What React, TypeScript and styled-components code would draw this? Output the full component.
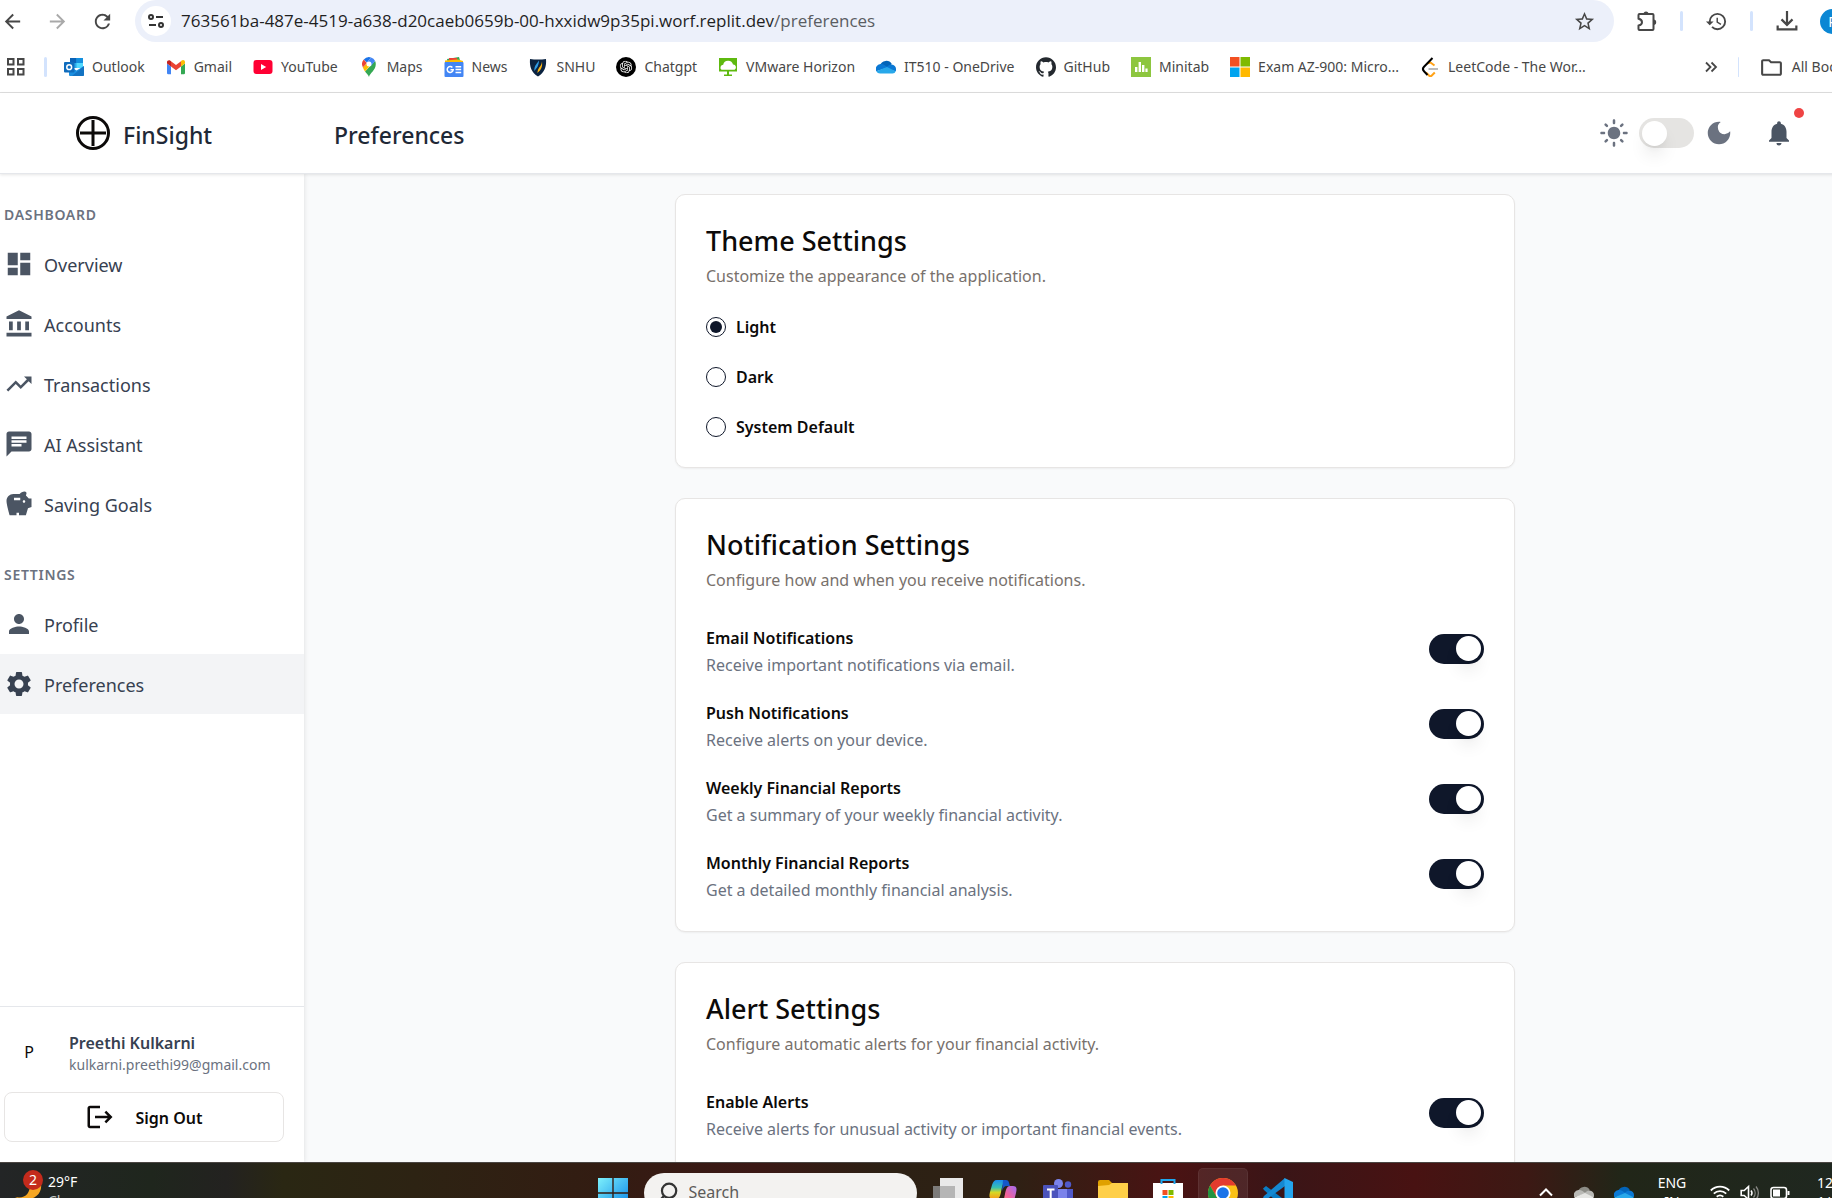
import React from "react";
import styled, { createGlobalStyle, css } from "styled-components";
import {
  MdAccountBalance,
  MdArrowBack,
  MdArrowForward,
  MdChat,
  MdDarkMode,
  MdDashboard,
  MdHistory,
  MdLightMode,
  MdLogout,
  MdNotifications,
  MdOutlineFolder,
  MdPerson,
  MdRefresh,
  MdSavings,
  MdSettings,
  MdStarBorder,
  MdTrendingUp,
} from "react-icons/md";
import { SiGithub, SiOpenai } from "react-icons/si";

const GlobalStyle = createGlobalStyle`
  *, *::before, *::after { box-sizing: border-box; }
  body {
    margin: 0;
    overflow: hidden;
    background: #fff;
    color: #0c0a09;
    font-family: "Noto Sans", "Open Sans", sans-serif;
    font-size: 16px;
  }
  h1, h2, p { margin: 0; }
  button { font: inherit; color: inherit; background: none; border: 0; padding: 0; cursor: pointer; }
  a { color: inherit; text-decoration: none; }
  svg { display: block; flex: none; }
`;

/* The desktop is a little larger than the window and is cut at its right and bottom edges. */
const Desktop = styled.div`
  display: flex;
  flex-direction: column;
  width: calc(100% + 54px);
  height: calc(100vh + 24px);
`;

/* ---------- browser ---------- */

const Toolbar = styled.header`
  display: flex;
  align-items: center;
  height: 42px;
  color: #474747;
`;

const NavButtons = styled.div`
  display: flex;
  gap: 20px;
  padding-right: 20px;
`;

const ToolButton = styled.button<{ $muted?: boolean }>`
  display: grid;
  place-items: center;
  width: 25px;
  height: 25px;
  color: ${(p) => (p.$muted ? "#a9a9a9" : "#474747")};
`;

const AddressBar = styled.div`
  flex: 1;
  display: flex;
  align-items: center;
  gap: 10px;
  height: 42px;
  padding: 0 17px 0 6px;
  border-radius: 21px;
  background: #ecf0fa;
`;

const SiteInfo = styled.button`
  display: grid;
  place-items: center;
  width: 30px;
  height: 30px;
  border-radius: 50%;
  background: #fff;
`;

const Url = styled.a`
  flex: 1;
  font-family: "Open Sans", "Noto Sans", sans-serif;
  font-size: 17px;
  line-height: 24px;
  color: #1f1f1f;
  span { color: #5a5d62; }
`;

const ToolbarEnd = styled.div`
  display: flex;
  align-items: center;
  gap: 21px;
  width: 272px;
  padding-left: 20px;
`;

const Divider = styled.span`
  width: 3px;
  height: 20px;
  border-radius: 2px;
  background: #d3e3fd;
`;

const Avatar = styled.button`
  width: 25px;
  height: 25px;
  border-radius: 50%;
  background: #0b87d4;
  color: #fff;
  font-size: 14px;
`;

const Bookmarks = styled.nav`
  display: flex;
  align-items: center;
  height: 51px;
  padding-left: 6px;
  border-bottom: 1px solid #dedede;
  font-size: 14px;
  line-height: 20px;
  color: #474747;
  white-space: nowrap;
`;

const BookmarkList = styled.div`
  flex: 1;
  display: flex;
  gap: 21px;
  padding-left: 17px;
`;

const AppsButton = styled.button`
  margin-right: 18px;
`;

const Bookmark = styled.a`
  display: flex;
  align-items: center;
  gap: 8px;
`;

const BookmarksEnd = styled.div`
  display: flex;
  align-items: center;
  gap: 20px;
  width: 182px;
`;

/* ---------- app frame ---------- */

const AppHeader = styled.header`
  position: relative;
  z-index: 1;
  display: flex;
  align-items: center;
  height: 81px;
  border-bottom: 1px solid #e5e7eb;
  box-shadow: 0 1px 3px rgba(0, 0, 0, 0.1);
  background: #fff;
  color: #1f2937;
`;

const Brand = styled.a`
  display: flex;
  align-items: center;
  gap: 13px;
  width: 334px;
  padding-left: 76px;
`;

const HeaderText = styled.span`
  display: block;
  padding-top: 3px;
  font-size: 23px;
  line-height: 32px;
  font-weight: 500;
`;

const PageTitle = styled.h1`
  flex: 1;
`;

const ThemeSwitch = styled.div`
  display: flex;
  align-items: center;
  gap: 10px;
  padding-right: 30px;
  color: #6b7280;
`;

const Bell = styled.button`
  position: relative;
  width: 30px;
  margin-right: 92px;
  color: #4b5563;
`;

const UnreadDot = styled.span`
  position: absolute;
  top: -10px;
  right: -10px;
  width: 10px;
  height: 10px;
  border-radius: 50%;
  background: #ef4444;
`;

const Body = styled.div`
  flex: 1;
  min-height: 0;
  display: flex;
`;

const Sidebar = styled.aside`
  position: relative;
  display: flex;
  flex-direction: column;
  width: 304px;
  background: #fff;
  box-shadow: 0 0 5px rgba(0, 0, 0, 0.12);
`;

const Menu = styled.nav`
  flex: 1;
`;

const MenuHeading = styled.h2`
  height: 60px;
  padding: 31px 4px 0;
  font-size: 14px;
  line-height: 20px;
  font-weight: 600;
  letter-spacing: 0.05em;
  text-transform: uppercase;
  color: #6b7280;
`;

const MenuItem = styled.a<{ $active?: boolean }>`
  display: flex;
  align-items: center;
  gap: 10px;
  height: 60px;
  padding: 0 4px;
  font-size: 18px;
  line-height: 28px;
  color: #374151;
  background: ${(p) => (p.$active ? "#f3f4f6" : "transparent")};
  svg { color: ${(p) => (p.$active ? "#374151" : "#4b5563")}; }
`;

const IconLabel = styled.span`
  padding-top: 2px;
`;

const Account = styled.div`
  padding: 20px 20px 20px 4px;
  border-top: 1px solid #e5e7eb;
`;

const Person = styled.div`
  display: flex;
  align-items: center;
  gap: 15px;
  height: 50px;
  margin-bottom: 15px;
`;

const Initial = styled.span`
  width: 50px;
  text-align: center;
`;

const PersonText = styled.div`
  padding-top: 2px;
`;

const PersonName = styled.p`
  line-height: 24px;
  font-weight: 600;
  color: #374151;
`;

const PersonMail = styled.p`
  font-size: 14px;
  line-height: 20px;
  color: #6b7280;
`;

const SignOut = styled.button`
  display: flex;
  align-items: center;
  justify-content: center;
  gap: 20px;
  width: 100%;
  height: 50px;
  border: 1px solid #e7e5e4;
  border-radius: 8px;
  font-weight: 600;
`;

const Main = styled.main`
  flex: 1;
  overflow: hidden;
  padding: 20px 30px;
  background: #f9fafb;
`;

const Cards = styled.div`
  display: flex;
  flex-direction: column;
  gap: 30px;
  max-width: 840px;
  margin: 0 auto;
`;

const Card = styled.section`
  padding: 30px;
  border: 1px solid #e7e5e4;
  border-radius: 10px;
  background: #fff;
  box-shadow: 0 1px 2px rgba(0, 0, 0, 0.05);
`;

const CardTitle = styled.h2`
  font-size: 27px;
  line-height: 32px;
  font-weight: 500;
`;

const CardIntro = styled.p`
  padding: 6px 0 28px;
  line-height: 26px;
  color: #78716c;
`;

const Options = styled.div`
  display: grid;
  gap: 30px;
`;

const Option = styled.label`
  display: flex;
  align-items: center;
  gap: 10px;
  height: 20px;
  font-weight: 600;
`;

const Radio = styled.input`
  appearance: none;
  display: grid;
  place-items: center;
  width: 20px;
  height: 20px;
  margin: 0;
  border: 1px solid #0f172a;
  border-radius: 50%;
  &:checked::before {
    content: "";
    width: 12px;
    height: 12px;
    border-radius: 50%;
    background: #0f172a;
  }
`;

const Settings = styled.div`
  display: grid;
  gap: 20px;
`;

const Setting = styled.label`
  display: flex;
  align-items: center;
  justify-content: space-between;
  height: 55px;
`;

const SettingText = styled.span`
  padding-top: 6px;
`;

const SettingName = styled.span`
  display: block;
  line-height: 27px;
  font-weight: 600;
`;

const SettingHint = styled.span`
  display: block;
  line-height: 27px;
  color: #6b7280;
`;

const Toggle = styled.input`
  appearance: none;
  display: grid;
  align-items: center;
  justify-items: start;
  width: 55px;
  height: 30px;
  margin: 0;
  padding: 0 3px;
  border-radius: 15px;
  background: #e5e4e2;
  &::before {
    content: "";
    width: 25px;
    height: 25px;
    border-radius: 50%;
    background: #fff;
    box-shadow: 0 12px 18px -4px rgba(0, 0, 0, 0.12), 0 5px 8px -5px rgba(0, 0, 0, 0.1);
  }
  &:checked {
    justify-items: end;
    background: #0f172a;
  }
`;

/* ---------- taskbar ---------- */

const Taskbar = styled.footer`
  position: relative;
  z-index: 2;
  display: grid;
  grid-template-columns: 1fr auto 1fr;
  align-items: center;
  height: 60px;
  flex: none;
  border-top: 1px solid #4a4542;
  background: linear-gradient(90deg, #232526 0, #1f261d 8%, #232220 12%, #2a2713 15%, #2d2313 22%, #331c12 32%,
    #3b1815 40%, #2c2114 47%, #2f2014 54%, #4a1313 62%, #3a1517 68%, #481212 75%, #3c1914 81%, #212618 86%, #1f2822 100%);
  color: #fff;
  font-size: 14px;
  line-height: 19px;
`;

const Weather = styled.button`
  display: flex;
  align-items: center;
  gap: 5px;
  padding: 0 0 3px 13px;
  text-align: left;
  small { display: block; font-size: 14px; color: #c9c9c6; }
`;

const WeatherIcon = styled.span`
  position: relative;
  width: 30px;
  height: 42px;
`;

const Badge = styled.span`
  position: absolute;
  top: 0;
  right: 0;
  width: 20px;
  height: 20px;
  border-radius: 50%;
  background: #c42b1c;
  line-height: 20px;
  text-align: center;
`;

const Pinned = styled.div`
  display: flex;
  align-items: center;
  gap: 5px;
  padding-left: 4px;
`;

const Pin = styled.button<{ $active?: boolean }>`
  display: grid;
  place-items: center;
  width: 50px;
  height: 50px;
  border-radius: 5px;
  ${(p) => p.$active && css`background: rgba(255, 255, 255, 0.08); box-shadow: inset 0 0 0 1px rgba(255, 255, 255, 0.06);`}
`;

const SearchBox = styled.label`
  display: flex;
  align-items: center;
  gap: 10px;
  width: 273px;
  height: 40px;
  margin: 0 1px;
  padding: 0 13px;
  border-radius: 20px;
  background: #f3f2f0;
`;

const SearchInput = styled.input`
  width: 100%;
  border: 0;
  padding: 0;
  background: none;
  font: inherit;
  font-size: 16px;
  color: #5c5b59;
  &::placeholder { color: #5c5b59; opacity: 1; }
`;

const Tray = styled.div`
  display: flex;
  align-items: center;
  justify-content: flex-end;
  gap: 20px;
`;

const TrayGroup = styled.div`
  display: flex;
  gap: 10px;
`;

const Language = styled.div`
  width: 36px;
  padding-bottom: 2px;
  text-align: center;
`;

const Clock = styled.time`
  width: 69px;
  margin-left: 7px;
  padding-bottom: 2px;
`;

/* ---------- drawings ---------- */

type Drawing = { size?: number; box?: string; children: React.ReactNode };
const Draw = ({ size = 20, box = "0 0 20 20", children }: Drawing) => (
  <svg width={size} height={size} viewBox={box} fill="none" aria-hidden="true">
    {children}
  </svg>
);

const OutlookIcon = () => (
  <Draw>
    <path d="M6 1h13v10H6z" fill="#28a8ea" />
    <path d="M6 1h6.500v5H6z" fill="#0a63b8" />
    <path d="M12.500 1H19v5h-6.500z" fill="#1490df" />
    <path d="M12.500 6H19v5h-6.500z" fill="#50d9ff" />
    <path d="M5 9l7.500 4.500L20 9v9a1 1 0 0 1-1 1H6a1 1 0 0 1-1-1z" fill="#1b8fe0" />
    <path d="M20 9v9a1 1 0 0 1-1 1H8z" fill="#1066b5" opacity=".7" />
    <rect y="5" width="10.500" height="10.500" rx="1" fill="#0f6cbd" />
    <circle cx="5.200" cy="10.200" r="2.400" stroke="#fff" strokeWidth="1.500" />
  </Draw>
);
const GmailIcon = () => (
  <Draw>
    <path d="M1 6.500V16a1.300 1.300 0 0 0 1.300 1.300H5V9.500z" fill="#4285f4" />
    <path d="M15 9.500v7.800h2.700A1.300 1.300 0 0 0 19 16V6.500z" fill="#34a853" />
    <path d="M15 4.200v5.300l4-3V5c0-2-2-2.700-3.400-1.600z" fill="#fbbc04" />
    <path d="M5 9.500V4.200l5 3.700 5-3.700v5.300l-5 3.800z" fill="#ea4335" />
    <path d="M1 5v1.500l4 3V4.200l-.6-.5C3 2.600 1 3.500 1 5z" fill="#c5221f" />
  </Draw>
);
const YouTubeIcon = () => (
  <Draw>
    <rect x=".5" y="3" width="19" height="14" rx="3" fill="#ff0033" />
    <path d="M8 7v6l5.200-3z" fill="#fff" />
  </Draw>
);
const MapsIcon = () => (
  <Draw>
    <path d="M10 20c.8-4 6.800-6.600 6.800-13 0-1-.2-2-.7-3L6 14.500c1.700 2 3.300 3.500 4 5.500z" fill="#34a853" />
    <path d="M3.900 10.500C4.500 12 5.200 13.400 6 14.500l6.300-7.300-4.600-1z" fill="#fbbc04" />
    <path d="M4.800 2.600A7 7 0 0 0 3.900 10.500l4-4.500z" fill="#ea4335" />
    <path d="M12 .4a6.800 6.800 0 0 0-7.200 2.200L8 5.500z" fill="#1a73e8" />
    <path d="M12 .4 7.800 5.800l4.300 3 4-4.800A6.500 6.500 0 0 0 12 .4z" fill="#4285f4" />
    <circle cx="10" cy="6.900" r="2.500" fill="#fff" />
  </Draw>
);
const NewsIcon = () => (
  <Draw>
    <path d="M3 2l12-2 2 7H4z" fill="#34a853" />
    <path d="M5 1h8v7H5z" fill="#ea4335" />
    <path d="M1 3.500l13-1 5 1.500v4H1z" fill="#fbbc04" />
    <rect x=".5" y="5" width="19" height="15" rx="1" fill="#4285f4" />
    <path d="M8.400 10.400a3 3 0 1 0 .8 2.300H6.500M11.500 9.700h5.700M11.500 12.600h5.700M11.500 15.500h5.700" stroke="#fff" strokeWidth="1.500" />
  </Draw>
);
const ShieldIcon = () => (
  <Draw>
    <path d="M2 2c5 .8 11 .8 16 0 .6 8-1.500 13.500-8 17.500C3.500 15.500 1.400 10 2 2z" fill="#0a2240" />
    <path d="M11 3.500C8 7.500 6 9.500 6.400 14c2-2.500 4.500-5 4.600-10.500z" fill="#2f9be4" />
    <path d="M14 4.500c-.5 5-4.300 6-4.600 11.500 3.600-3 5.300-6 4.600-11.500z" fill="#fdb714" />
  </Draw>
);
const ChatIcon = () => (
  <Draw box="0 0 40 40">
    <circle cx="20" cy="20" r="20" fill="#000" />
    <g transform="translate(7.500 7.500)">
      <SiOpenai size={25} color="#fff" />
    </g>
  </Draw>
);
const HorizonIcon = () => (
  <Draw>
    <path d="M1 1h18v13.500H1zM9 14h2v4H9zM6 17.500h8V19H6z" fill="#5eb90f" />
    <path d="M3.500 12.800a2.800 2.800 0 0 1 1.700-5A5 5 0 0 1 15 7.600a2.800 2.800 0 0 1 1.600 5.200z" fill="#fff" />
  </Draw>
);
const CloudIcon = ({ tones }: { tones: [string, string, string] }) => (
  <Draw>
    <path d="M4 8.500A6.500 6.500 0 0 1 15.800 7L10 12z" fill={tones[0]} />
    <path d="M4.500 7a5 5 0 0 0-4.200 7.200L12 10.500 8.500 8A6 6 0 0 0 4.500 7z" fill={tones[1]} />
    <path d="M8.500 11.500l4-3a4.800 4.800 0 0 1 3.200-1 4.500 4.500 0 0 1 4.300 4.600 4 4 0 0 1-.3 2.200z" fill={tones[1]} />
    <path d="M.3 14.200 11 10l8.700 4.300A3.300 3.300 0 0 1 16.600 16.500H4a4.500 4.500 0 0 1-3.700-2.300z" fill={tones[2]} />
  </Draw>
);
const MinitabIcon = () => (
  <Draw>
    <path d="M0 0h20v20H0z" fill="#8dc63f" />
    <path d="M4 10h2.400v5H4zM7.600 5H10v10H7.600zM11 8h2.400v7H11zM14.400 11.500h2.200V15h-2.200z" fill="#fff" />
  </Draw>
);
const MicrosoftIcon = () => (
  <Draw>
    <path d="M0 0h9.500v9.500H0z" fill="#f25022" />
    <path d="M10.500 0H20v9.500h-9.500z" fill="#7fba00" />
    <path d="M0 10.500h9.500V20H0z" fill="#00a4ef" />
    <path d="M10.500 10.500H20V20h-9.500z" fill="#ffb900" />
  </Draw>
);
const LeetCodeIcon = () => (
  <Draw>
    <path d="M7 6.500 10.500 5.500l4 3M6 15.500l3 3a2 2 0 0 0 2.800 0l3-3" stroke="#ffa116" strokeWidth="2" />
    <path d="M12.500 1 4 9.700a3.200 3.200 0 0 0 0 4.500L7.500 18" stroke="#000" strokeWidth="2" />
    <path d="M8.500 12H18" stroke="#b3b3b3" strokeWidth="1.800" />
  </Draw>
);

const bookmarks: { name: string; icon: React.ReactNode }[] = [
  { name: "Outlook", icon: <OutlookIcon /> },
  { name: "Gmail", icon: <GmailIcon /> },
  { name: "YouTube", icon: <YouTubeIcon /> },
  { name: "Maps", icon: <MapsIcon /> },
  { name: "News", icon: <NewsIcon /> },
  { name: "SNHU", icon: <ShieldIcon /> },
  { name: "Chatgpt", icon: <ChatIcon /> },
  { name: "VMware Horizon", icon: <HorizonIcon /> },
  { name: "IT510 - OneDrive", icon: <CloudIcon tones={["#0364b8", "#0a78d4", "#28a8ea"]} /> },
  { name: "GitHub", icon: <SiGithub size={20} color="#24292f" /> },
  { name: "Minitab", icon: <MinitabIcon /> },
  { name: "Exam AZ-900: Micro...", icon: <MicrosoftIcon /> },
  { name: "LeetCode - The Wor...", icon: <LeetCodeIcon /> },
];

const menu = [
  {
    heading: "Dashboard",
    items: [
      { name: "Overview", Icon: MdDashboard },
      { name: "Accounts", Icon: MdAccountBalance },
      { name: "Transactions", Icon: MdTrendingUp },
      { name: "AI Assistant", Icon: MdChat },
      { name: "Saving Goals", Icon: MdSavings },
    ],
  },
  {
    heading: "Settings",
    items: [
      { name: "Profile", Icon: MdPerson },
      { name: "Preferences", Icon: MdSettings },
    ],
  },
];

const notifications = [
  ["Email Notifications", "Receive important notifications via email."],
  ["Push Notifications", "Receive alerts on your device."],
  ["Weekly Financial Reports", "Get a summary of your weekly financial activity."],
  ["Monthly Financial Reports", "Get a detailed monthly financial analysis."],
];
const alerts = [["Enable Alerts", "Receive alerts for unusual activity or important financial events."]];

const SettingList = ({ rows }: { rows: string[][] }) => (
  <Settings>
    {rows.map(([name, hint]) => (
      <Setting key={name}>
        <SettingText>
          <SettingName>{name}</SettingName>
          <SettingHint>{hint}</SettingHint>
        </SettingText>
        <Toggle type="checkbox" role="switch" defaultChecked />
      </Setting>
    ))}
  </Settings>
);

const Browser = () => (
  <>
    <Toolbar>
      <NavButtons>
        <ToolButton aria-label="Back"><MdArrowBack size={23} /></ToolButton>
        <ToolButton aria-label="Forward" $muted><MdArrowForward size={23} /></ToolButton>
        <ToolButton aria-label="Reload"><MdRefresh size={23} /></ToolButton>
      </NavButtons>
      <AddressBar>
        <SiteInfo aria-label="Site information">
          <Draw>
            <g stroke="#333" strokeWidth="2">
              <circle cx="5" cy="6" r="2" />
              <path d="M10 6h7M3 14h7" />
              <circle cx="15" cy="14" r="2" />
            </g>
          </Draw>
        </SiteInfo>
        <Url href="#">
          763561ba-487e-4519-a638-d20caeb0659b-00-hxxidw9p35pi.worf.replit.dev<span>/preferences</span>
        </Url>
        <ToolButton aria-label="Bookmark this page"><MdStarBorder size={23} /></ToolButton>
      </AddressBar>
      <ToolbarEnd>
        <ToolButton aria-label="Extensions">
          <Draw size={22} box="0 0 22 22">
            <path
              d="M3.500 4h13a1 1 0 0 1 1 1v14a1 1 0 0 1-1 1h-13a1 1 0 0 1-1-1v-3.500c3-.5 3.500-1.800 3.500-3.300S5.500 9.300 2.500 8.700V5a1 1 0 0 1 1-1z"
              stroke="#474747"
              strokeWidth="2"
              strokeLinejoin="round"
            />
            <path d="M7.500 4a2.500 2.500 0 0 1 5 0zM17.500 9.500a2.700 2.700 0 0 1 0 5.400z" fill="#474747" />
          </Draw>
        </ToolButton>
        <Divider />
        <ToolButton aria-label="History"><MdHistory size={23} /></ToolButton>
        <Divider />
        <ToolButton aria-label="Downloads">
          <Draw size={22}>
            <path d="M10 1v12M5 8.500l5 5 5-5M1.500 14v3.700h17V14" stroke="#474747" strokeWidth="2" />
          </Draw>
        </ToolButton>
        <Avatar aria-label="Profile">P</Avatar>
      </ToolbarEnd>
    </Toolbar>
    <Bookmarks aria-label="Bookmarks">
      <AppsButton aria-label="Apps">
        <Draw>
          <path d="M2 2h5.500v5.500H2zM12 2h5.500v5.500H12zM2 12h5.500v5.500H2zM12 12h5.500v5.500H12z" stroke="#474747" strokeWidth="2" />
        </Draw>
      </AppsButton>
      <Divider />
      <BookmarkList>
        {bookmarks.map((b) => (
          <Bookmark href="#" key={b.name}>
            {b.icon}
            {b.name}
          </Bookmark>
        ))}
      </BookmarkList>
      <BookmarksEnd>
        <button aria-label="More bookmarks">
          <Draw size={14} box="0 0 14 14">
            <path d="M2 2.500 6.500 7 2 11.500M7.500 2.500 12 7l-4.500 4.500" stroke="#474747" strokeWidth="1.800" />
          </Draw>
        </button>
        <Divider />
        <Bookmark href="#">
          <MdOutlineFolder size={25} />
          All Bookmarks
        </Bookmark>
      </BookmarksEnd>
    </Bookmarks>
  </>
);

const App = () => (
  <Desktop>
    <GlobalStyle />
    <Browser />
    <AppHeader>
      <Brand href="#">
        <Draw size={34} box="0 0 34 34">
          <g stroke="#0c0a09" strokeWidth="3">
            <circle cx="17" cy="17" r="15.500" />
            <path d="M17 4v26M4 17h26" />
          </g>
        </Draw>
        <HeaderText>FinSight</HeaderText>
      </Brand>
      <PageTitle>
        <HeaderText>Preferences</HeaderText>
      </PageTitle>
      <ThemeSwitch>
        <MdLightMode size={30} />
        <Toggle type="checkbox" role="switch" aria-label="Dark mode" />
        <MdDarkMode size={30} />
      </ThemeSwitch>
      <Bell aria-label="Notifications">
        <MdNotifications size={30} />
        <UnreadDot />
      </Bell>
    </AppHeader>
    <Body>
      <Sidebar>
        <Menu>
          {menu.map((group) => (
            <React.Fragment key={group.heading}>
              <MenuHeading>{group.heading}</MenuHeading>
              {group.items.map(({ name, Icon }) => (
                <MenuItem href="#" key={name} $active={name === "Preferences"}>
                  <Icon size={30} />
                  <IconLabel>{name}</IconLabel>
                </MenuItem>
              ))}
            </React.Fragment>
          ))}
        </Menu>
        <Account>
          <Person>
            <Initial>P</Initial>
            <PersonText>
              <PersonName>Preethi Kulkarni</PersonName>
              <PersonMail>kulkarni.preethi99@gmail.com</PersonMail>
            </PersonText>
          </Person>
          <SignOut>
            <MdLogout size={30} />
            <IconLabel>Sign Out</IconLabel>
          </SignOut>
        </Account>
      </Sidebar>
      <Main>
        <Cards>
          <Card>
            <CardTitle>Theme Settings</CardTitle>
            <CardIntro>Customize the appearance of the application.</CardIntro>
            <Options>
              {["Light", "Dark", "System Default"].map((name) => (
                <Option key={name}>
                  <Radio type="radio" name="theme" defaultChecked={name === "Light"} />
                  {name}
                </Option>
              ))}
            </Options>
          </Card>
          <Card>
            <CardTitle>Notification Settings</CardTitle>
            <CardIntro>Configure how and when you receive notifications.</CardIntro>
            <SettingList rows={notifications} />
          </Card>
          <Card>
            <CardTitle>Alert Settings</CardTitle>
            <CardIntro>Configure automatic alerts for your financial activity.</CardIntro>
            <SettingList rows={alerts} />
          </Card>
        </Cards>
      </Main>
    </Body>
    <Taskbar>
      <Weather>
        <WeatherIcon>
          <Badge>2</Badge>
          <Draw size={30} box="0 0 30 30">
            <path d="M28 14c2 12-12 20-26 13 10 2 15-3 15-13z" fill="#f5a623" />
          </Draw>
        </WeatherIcon>
        <span>
          29°F
          <small>Clear</small>
        </span>
      </Weather>
      <Pinned>
        <Pin aria-label="Start">
          <Draw size={30} box="0 0 30 30">
            <defs>
              <linearGradient id="win" x1="0" y1="0" x2="1" y2="1">
                <stop offset="0" stopColor="#7df0fb" />
                <stop offset="1" stopColor="#0a84e8" />
              </linearGradient>
            </defs>
            <path d="M0 0h14.300v14.300H0zM15.700 0H30v14.300H15.700zM0 15.700h14.300V30H0zM15.700 15.700H30V30H15.700z" fill="url(#win)" />
          </Draw>
        </Pin>
        <SearchBox>
          <Draw size={22}>
            <circle cx="11" cy="8" r="6.500" stroke="#333" strokeWidth="2" />
            <path d="M6.500 12.500 1.500 18" stroke="#333" strokeWidth="2.200" />
          </Draw>
          <SearchInput type="search" aria-label="Search" placeholder="Search" />
        </SearchBox>
        <Pin aria-label="Task view">
          <Draw size={30} box="0 0 30 30">
            <path d="M7 0h23v22H7z" fill="#e9e9e9" />
            <path d="M0 8h22v22H0z" fill="#8b8b8b" opacity=".85" />
            <path d="M7 8h15v14H7z" fill="#b5b5b5" />
          </Draw>
        </Pin>
        <Pin aria-label="Copilot">
          <Draw size={30} box="0 0 30 30">
            <defs>
              <linearGradient id="cpa" x1="0" y1="0" x2="0" y2="1">
                <stop offset="0" stopColor="#1b8cf0" />
                <stop offset=".4" stopColor="#38c0b0" />
                <stop offset=".65" stopColor="#d6d926" />
                <stop offset="1" stopColor="#f79a1c" />
              </linearGradient>
              <linearGradient id="cpb" x1="1" y1="0" x2="0" y2="1">
                <stop offset="0" stopColor="#a06cf5" />
                <stop offset=".5" stopColor="#f0629a" />
                <stop offset="1" stopColor="#fb8a5c" />
              </linearGradient>
            </defs>
            <path d="M9 2h9c-3 2-4 7-5 12-1 5-2 7-5 7H5c-4 0-4-3-3-7l2-7c1-3 2-5 5-5z" fill="url(#cpa)" />
            <path d="M15 2h3c3 0 3 3 4 6h-3c-3 0-4 2-5 5z" fill="#1657c8" />
            <path d="M21 28h-9c3-2 4-7 5-12 1-5 2-8 5-8h3c4 0 4 3 3 7l-2 8c-1 3-2 5-5 5z" fill="url(#cpb)" />
          </Draw>
        </Pin>
        <Pin aria-label="Teams">
          <Draw size={30} box="0 0 30 30">
            <circle cx="15.500" cy="5.500" r="4.500" fill="#7b83eb" />
            <circle cx="25" cy="6.500" r="3.200" fill="#5059c9" />
            <path d="M21 11h9v10c0 4-6 5-9 2z" fill="#5059c9" />
            <path d="M10 11h14v12c0 8-14 8-14 0z" fill="#7b83eb" />
            <rect y="7" width="15" height="16" rx="1" fill="#4b53bc" />
            <path d="M4 11.500h7.500M7.700 11.500V20" stroke="#fff" strokeWidth="2" />
          </Draw>
        </Pin>
        <Pin aria-label="File Explorer">
          <Draw size={30} box="0 0 30 30">
            <path d="M0 4a2 2 0 0 1 2-2h9l3 3v5H0z" fill="#e0a100" />
            <path d="M0 8l11-1 3-2h16v21a2 2 0 0 1-2 2H2a2 2 0 0 1-2-2z" fill="#ffcf48" />
            <path d="M6 20h18v3H6z" fill="#d9a400" />
          </Draw>
        </Pin>
        <Pin aria-label="Microsoft Store">
          <Draw size={30} box="0 0 30 30">
            <path d="M0 5h30v19a4 4 0 0 1-4 4H4a4 4 0 0 1-4-4z" fill="#fff" />
            <path d="M8.500 6V2h13v4" stroke="#1ea7ee" strokeWidth="2" />
            <path d="M9.500 12H14.500v5h-5z" fill="#f25022" />
            <path d="M15.500 12h5v5h-5z" fill="#7fba00" />
            <path d="M9.500 18h5v5h-5z" fill="#00a4ef" />
            <path d="M15.500 18h5v5h-5z" fill="#ffb900" />
          </Draw>
        </Pin>
        <Pin aria-label="Chrome" $active>
          <Draw size={30} box="0 0 30 30">
            <circle cx="15" cy="15" r="15" fill="#fbc116" />
            <path d="M2 7.500A15 15 0 0 1 28 7.500H15L8.500 18.700z" fill="#e33b2e" />
            <path d="M2 7.500 8.500 18.700A7.500 7.500 0 0 0 15 22.500L13 30A15 15 0 0 1 2 7.500z" fill="#229342" />
            <circle cx="15" cy="15" r="7.500" fill="#fff" />
            <circle cx="15" cy="15" r="5.800" fill="#1a73e8" />
          </Draw>
        </Pin>
        <Pin aria-label="Visual Studio Code">
          <Draw size={30} box="0 0 30 30">
            <path d="M0 10.500 3 8l18 13.500V30L1 12z" fill="#0a7cc4" />
            <path d="M0 19.500 3 22 22 8V0L1 18z" fill="#1588d1" />
            <path d="M21.500 0 30 4v22l-8.500 4z" fill="#24a5ee" />
          </Draw>
        </Pin>
      </Pinned>
      <Tray>
        <Draw size={16} box="0 0 16 16">
          <path d="M2 10.500 8 4.500l6 6" stroke="#fff" strokeWidth="2" />
        </Draw>
        <CloudIcon tones={["#8c8c86", "#b9b9b5", "#e6e6e3"]} />
        <CloudIcon tones={["#0364b8", "#0a78d4", "#28a8ea"]} />
        <Language>
          ENG
          <br />
          IN
        </Language>
        <TrayGroup>
          <Draw>
            <g stroke="#fff" strokeWidth="1.800">
              <path d="M.8 7.500a13 13 0 0 1 18.400 0M3.800 10.700a9 9 0 0 1 12.400 0M6.700 13.800a5 5 0 0 1 6.600 0" />
            </g>
            <circle cx="10" cy="16.500" r="1.800" fill="#fff" />
          </Draw>
          <Draw>
            <path d="M1.200 7.500v5h3l4.300 4V3.500l-4.300 4z" stroke="#fff" strokeWidth="1.600" />
            <path d="M11 7.500a4 4 0 0 1 0 5" stroke="#fff" strokeWidth="1.500" />
            <path d="M13.500 5.500a7 7 0 0 1 0 9M16 3.500a10 10 0 0 1 0 13" stroke="#8a8a86" strokeWidth="1.300" />
          </Draw>
          <Draw>
            <rect x="1" y="4.500" width="15.500" height="11" rx="2.500" stroke="#fff" strokeWidth="1.600" />
            <path d="M3 6.500h7v7H3zM17.500 8h2v4h-2z" fill="#fff" />
          </Draw>
        </TrayGroup>
        <Clock>
          12
          <br />
          1/1
        </Clock>
      </Tray>
    </Taskbar>
  </Desktop>
);

export default App;
